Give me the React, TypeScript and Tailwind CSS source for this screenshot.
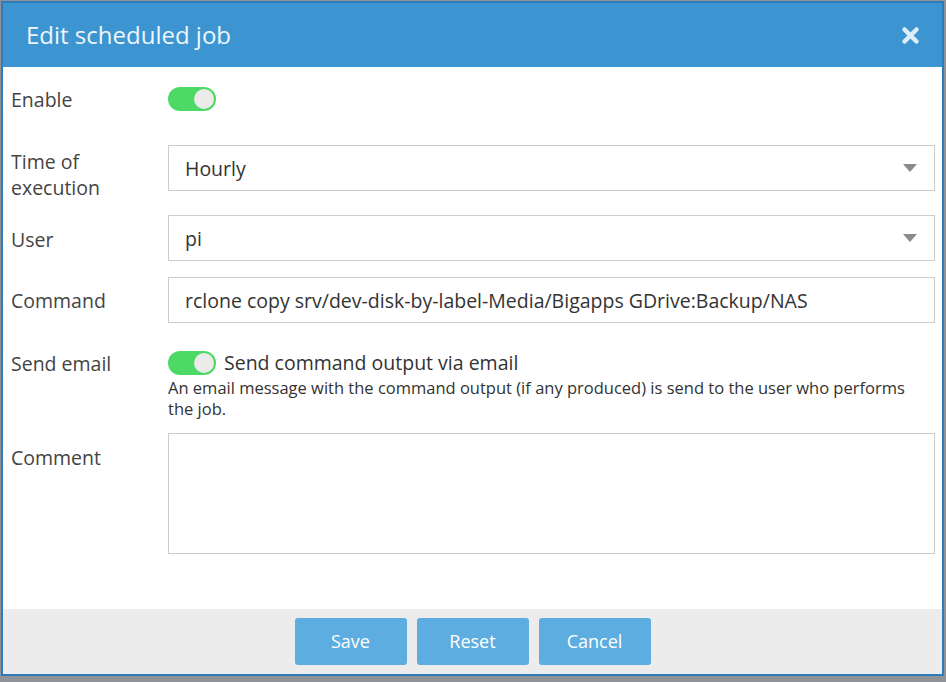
const font = { fontFamily: '"Open Sans", "Noto Sans", sans-serif' };

const Toggle = () => (
    <div className="relative w-[48px] h-[24px] rounded-full bg-[#4cd964] shrink-0">
        <div className="absolute right-[2px] top-[2px] w-[20px] h-[20px] rounded-full bg-[#ebebeb]" />
    </div>
);

const Caret = () => (
    <svg width="14" height="8" viewBox="0 0 14 8" className="shrink-0">
        <path d="M0 0 L14 0 L7 8 Z" fill="#8a8a8a" />
    </svg>
);

const SelectBox = ({ value }: { value: string }) => (
    <div className="flex-1 h-[46px] border border-[#cccccc] bg-white flex items-center pl-[16px] pr-[17px]">
        <span className="flex-1 text-[#333] pt-[2px]">{value}</span>
        <Caret />
    </div>
);

export default function App() {
    return (
        <div className="w-[946px] h-[682px] bg-[#8f9297] pt-[1px] pl-[1px]" style={font}>
            <div className="w-[943px] h-[675px] border-2 border-[#2b7cbd] bg-white flex flex-col">
                {/* header */}
                <div className="h-[64px] bg-[#3c95d0] flex items-center pl-[23px] pr-[22px]">
                    <h1 className="flex-1 text-[24px] text-[#eef6fc] leading-none">Edit scheduled job</h1>
                    <svg width="19" height="19" viewBox="0 0 19 19">
                        <path d="M3.5 3.5 L15.5 15.5 M15.5 3.5 L3.5 15.5" stroke="#dcedf9" strokeWidth="4.5" strokeLinecap="round" />
                    </svg>
                </div>

                {/* body */}
                <div className="flex-1 pl-[8px] pr-[7px] text-[#444] text-[19.5px]">
                    <div className="flex items-center mt-[20px] h-[24px]">
                        <div className="w-[157px] pt-[1px]">Enable</div>
                        <Toggle />
                    </div>

                    <div className="flex mt-[34px]">
                        <div className="w-[157px] pt-[4px] leading-[26px]">Time of<br />execution</div>
                        <SelectBox value="Hourly" />
                    </div>

                    <div className="flex items-center mt-[14px]">
                        <div className="w-[157px] pt-[4px]">User</div>
                        <SelectBox value="pi" />
                    </div>

                    <div className="flex items-center mt-[16px]">
                        <div className="w-[157px] pt-[2px]">Command</div>
                        <div className="flex-1 h-[46px] border border-[#cccccc] flex items-center pl-[16px] pt-[2px] text-[#333]">
                            rclone copy srv/dev-disk-by-label-Media/Bigapps GDrive:Backup/NAS
                        </div>
                    </div>

                    <div className="flex mt-[28px]">
                        <div className="w-[157px] leading-[24px] pt-[1px]">Send email</div>
                        <div className="flex-1">
                            <div className="flex items-center gap-[8px] h-[24px]">
                                <Toggle />
                                <span className="text-[#333]">Send command output via email</span>
                            </div>
                            <p className="text-[16.5px] leading-[21px] text-[#333] pt-[2px] pr-[20px]">
                                An email message with the command output (if any produced) is send to the user who performs the job.
                            </p>
                        </div>
                    </div>

                    <div className="flex mt-[14px]">
                        <div className="w-[157px] pt-[12px] leading-[26px]">Comment</div>
                        <div className="flex-1 h-[121px] border border-[#cccccc]" />
                    </div>
                </div>

                {/* footer */}
                <div className="h-[65px] bg-[#ececec] flex items-center justify-center gap-[10px]">
                    {["Save", "Reset", "Cancel"].map((label) => (
                        <button
                            key={label}
                            className="w-[112px] h-[47px] rounded-[3px] bg-[#5dade0] text-white text-[18px]"
                        >
                            {label}
                        </button>
                    ))}
                </div>
            </div>
        </div>
    );
}
